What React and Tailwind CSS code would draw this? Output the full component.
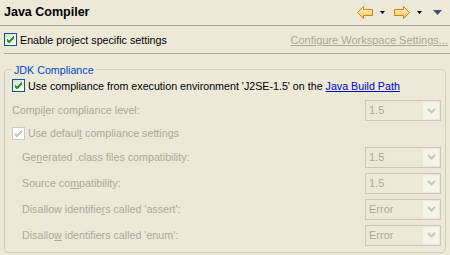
import React from 'react';

const Check = ({ disabled }) => (
    <span
        className={
            'w-[13px] h-[13px] shrink-0 flex items-center justify-center border ' +
            (disabled
                ? 'border-[#CAC8BB] bg-white'
                : 'border-[#1C5180] bg-gradient-to-br from-[#DCDCD7] to-white')
        }
    >
        <svg width="9" height="9" viewBox="0 0 9 9">
            <path
                d="M1 4 L3 6 L8 1 M1 5 L3 7 L8 2 M1 6 L3 8 L8 3"
                fill="none"
                stroke={disabled ? '#CAC8BB' : '#21A121'}
                strokeWidth="1"
            />
        </svg>
    </span>
);

const Combo = ({ value }) => (
    <div className="w-[76px] h-[21px] border border-[#C9C7BA] flex items-stretch p-[1px]">
        <span className="flex-1 flex items-center pl-[2px] text-[11px] text-[#ACA899]">{value}</span>
        <span className="w-[16px] bg-[#F5F4EA] flex items-center justify-center">
            <svg width="9" height="6" viewBox="0 0 9 6">
                <path d="M1 1 L4.5 4.5 L8 1" fill="none" stroke="#C9C7BA" strokeWidth="2" />
            </svg>
        </span>
    </div>
);

const Arrow = ({ flip }) => (
    <svg width="16" height="13" viewBox="0 0 16 13" className={flip ? 'scale-x-[-1]' : ''}>
        <defs>
            <linearGradient id="ag" x1="0" y1="0" x2="0" y2="1">
                <stop offset="0" stopColor="#FFF6C8" />
                <stop offset="1" stopColor="#F3C25A" />
            </linearGradient>
        </defs>
        <path
            d="M0.5 6.5 L6.5 0.5 L6.5 3.5 L15.5 3.5 L15.5 9.5 L6.5 9.5 L6.5 12.5 Z"
            fill="url(#ag)"
            stroke="#C8861E"
            strokeWidth="1"
        />
    </svg>
);

const Tri = () => (
    <svg width="5" height="3" viewBox="0 0 5 3">
        <path d="M0 0 H5 L2.5 3 Z" fill="#000" />
    </svg>
);

const Mn = ({ children }) => <span className="underline">{children}</span>;

const Row = ({ h, children, value }) => (
    <div className={'flex items-center justify-between pr-[4px] ' + h}>
        <div className="flex items-center">{children}</div>
        {value && <Combo value={value} />}
    </div>
);

const App = () => {
    return (
        <div className="w-[450px] h-[255px] bg-[#ECE9D8] text-[10.7px] text-black font-['Liberation_Sans',Arial,sans-serif] overflow-hidden">
            <div className="h-[26px] flex items-center justify-between pl-[4px] pr-[8px] border-b border-[#ACA899]">
                <span className="text-[12.5px] font-bold">Java Compiler</span>
                <div className="flex items-center">
                    <Arrow />
                    <span className="ml-[7px]"><Tri /></span>
                    <span className="ml-[9px]"><Arrow flip /></span>
                    <span className="ml-[7px]"><Tri /></span>
                    <svg width="9" height="5" viewBox="0 0 9 5" className="ml-[11px]">
                        <path d="M0 0 H9 L4.5 5 Z" fill="#4B4B7E" />
                    </svg>
                </div>
            </div>

            <div className="h-[27px] flex items-center justify-between pl-[4px] pr-[2px] pt-[1px]">
                <div className="flex items-center gap-[3px]">
                    <Check />
                    <span>Enable project specific settings</span>
                </div>
                <span className="text-[11px] text-[#ACA899] underline">Configure Workspace Settings...</span>
            </div>
            <div className="ml-[4px] border-t border-[#ACA899]" />

            <div className="relative mt-[15px] mx-[4px] rounded-[4px] border border-[#D0D0BF] pt-[4px] pb-[4px] pl-[7px]">
                <span className="absolute -top-[8px] left-[7px] px-[2px] bg-[#ECE9D8] text-[#0046D5]">JDK Compliance</span>
                <Row h="h-[24px]">
                    <Check />
                    <span className="ml-[3px]">
                        Use compliance from execution environment 'J2SE-1.5' on the{' '}
                        <span className="text-[#0000CC] underline">Java Build Path</span>
                    </span>
                </Row>
                <div className="text-[#ACA899]">
                    <Row h="h-[25px]" value="1.5">
                        <span>Compi<Mn>l</Mn>er compliance level:</span>
                    </Row>
                    <Row h="h-[21px]">
                        <Check disabled />
                        <span className="ml-[3px]">Use defaul<Mn>t</Mn> compliance settings</span>
                    </Row>
                    <Row h="h-[26px]" value="1.5">
                        <span className="pl-[10px]">Ge<Mn>n</Mn>erated .class files compatibility:</span>
                    </Row>
                    <Row h="h-[26px]" value="1.5">
                        <span className="pl-[10px]">Source co<Mn>m</Mn>patibility:</span>
                    </Row>
                    <Row h="h-[26px]" value="Error">
                        <span className="pl-[10px]">Disallow identifie<Mn>r</Mn>s called 'assert':</span>
                    </Row>
                    <Row h="h-[26px]" value="Error">
                        <span className="pl-[10px]">Disallo<Mn>w</Mn> identifiers called 'enum':</span>
                    </Row>
                </div>
            </div>
        </div>
    );
};

export default App;
